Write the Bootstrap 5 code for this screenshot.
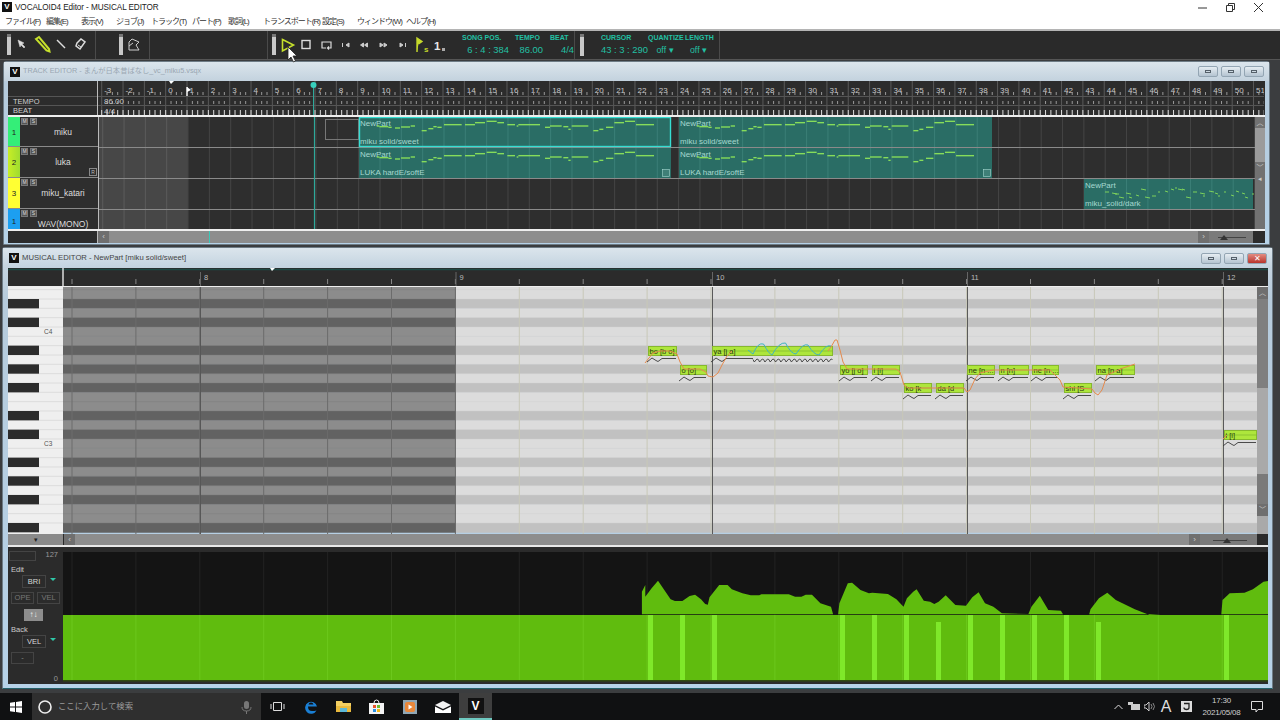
<!DOCTYPE html>
<html lang="ja">

<head>
    <meta charset="UTF-8">
    <title>VOCALOID4 Editor - MUSICAL EDITOR</title>
    <link href="https://cdn.jsdelivr.net/npm/bootstrap@5.3.0/dist/css/bootstrap.min.css" rel="stylesheet">
    <style>
        html, body { width: 1280px; height: 720px; overflow: hidden; }
        body { font-family: "Liberation Sans", "Noto Sans CJK JP", sans-serif; background: #3b3d3f; color: #ddd; position: relative; }
        svg { display: block; }
        svg text { font-family: "Liberation Sans", "Noto Sans CJK JP", sans-serif; }

        .app-title { height: 14px; background: #fff; color: #222; font-size: 8.2px; line-height: 15px; letter-spacing: -.1px; }
        .v-logo { width: 10px; height: 10px; background: #111; color: #fff; font-size: 8px; line-height: 10px; text-align: center; font-weight: 700; flex: none; letter-spacing: 0; }
        .app-title .v-logo { margin: 2px 3px 0 2px; }
        .cap-btn { width: 28px; height: 14px; }
        .app-menu { height: 15px; background: #fff; color: #333; font-size: 8px; line-height: 15px; padding-left: 5px; white-space: nowrap; letter-spacing: -1px; }
        .tool-strip { height: 31px; background: #2a2a2a; border-top: 2px solid #b4b4b4; border-bottom: 1px solid #555; color: #22c0a4; }
        .tool-group { height: 100%; border-right: 1px solid #4a4a4a; flex: none; }
        .tg-a { width: 96px; } .tg-b { width: 54px; } .tg-c { width: 118px; }
        .tg-d { width: 307px; } .tg-e { width: 145px; }
        .stat-col { display: flex; flex-direction: column; flex: none; padding-top: 2px; }
        .stat-label { font-size: 7px; line-height: 9px; white-space: nowrap; font-weight: 600; }
        .stat-value { font-size: 9.4px; line-height: 14px; margin-top: 1px; text-align: right; white-space: nowrap; }
        .sc-pos { width: 47px; margin-left: 12px; } .sc-tempo { width: 28px; margin-left: 6px; } .sc-beat { width: 24px; margin-left: 7px; }
        .sc-cursor { width: 44px; margin-left: 17px; } .sc-quant { width: 34px; margin-left: 3px; } .sc-len { width: 27px; margin-left: 3px; }
        .sc-quant .stat-value, .sc-len .stat-value { text-align: center; font-size: 8.8px; }
        .tool-grip { width: 4px; height: 22px; margin: 3px 0 0 5px; background: #c8c8c8; border-top: 3px solid #777; flex: none; }

        .mdi-area { height: 633px; padding-top: 1px; }
        .win-frame { border: 1px solid #6e7c86; border-radius: 3px 3px 0 0; background: linear-gradient(#cdd9e3, #b6cbdc 12%, #b6d2e8); }
        .win-track { width: 1267px; margin-left: 3px; height: 184px; padding: 0 4px; }
        .win-musical { width: 1271px; margin: 2px 0 0 2px; height: 442px; padding: 0 4px 0 5px; border-bottom-color: #24606a; }
        .win-head { align-items: center; }
        .win-track .win-head { height: 19px; font-size: 7.3px; color: #9aa7b2; background: linear-gradient(#dbe5ec, #c3d2de); margin: 0 -4px; padding: 0 5px; }
        .win-musical .win-head { height: 20px; font-size: 7.7px; color: #444; background: linear-gradient(#dbe5ec, #c3d3e0); margin: 0 -4px 0 -5px; padding: 0 5px; }
        .win-head .v-logo { margin: 0 3px 0 1px; }
        .win-btn { width: 20px; height: 11px; border: 1px solid #93a5b3; border-radius: 2px; background: linear-gradient(#e6edf2, #b4c4d1); margin-left: 3px; display: flex; align-items: center; justify-content: center; flex: none; }
        .win-btn i { display: block; width: 6px; height: 3px; border: 1px solid #55606a; }
        .win-btn.btn-x { background: linear-gradient(#e38b80, #b8342c); color: #fff; font-size: 8px; line-height: 9px; font-style: normal; }

        .ruler-head { width: 90px; background: #2c2c2c; border-right: 1px solid #bbb; color: #cfcfcf; font-size: 7.5px; flex: none; }
        .rh-line { height: 9px; line-height: 9px; padding-left: 5px; border-top: 1px solid #555; }
        .rh-top { height: 15px; }
        .track-ruler { height: 36px; background: #2c2c2c; border-bottom: 2px solid #eee; }
        .track-body { height: 112px; }
        .track-heads { width: 91px; border-right: 1px solid #bbb; flex: none; background: #2e2e2e; }
        .t-row { border-bottom: 1px solid #8a8a8a; position: relative; }
        .t-row:last-child { border-bottom: 0; }
        .tr-h30 { height: 30px; } .tr-h31 { height: 31px; } .tr-h20 { height: 20px; }
        .t-tab { width: 12px; color: #222; font-size: 8px; text-align: center; padding-top: 10px; flex: none; }
        .t-tab.last { padding-top: 7px; }
        .tab-g { background: #34ee78; } .tab-l { background: linear-gradient(90deg, #c8ee26, #9fdc30); } .tab-y { background: #ffff33; } .tab-b { background: #1c9ff0; }
        .t-name { font-size: 8.5px; color: #ddd; flex-grow: 1; text-align: center; padding: 9px 0 0 8px; white-space: nowrap; }
        .t-name.last { padding-top: 9px; }
        .ms-box { position: absolute; left: 13px; top: 1px; display: flex; gap: 2px; }
        .ms-box span { width: 7px; height: 7px; border: 1px solid #777; background: #555; font-size: 5px; line-height: 5px; text-align: center; color: #ddd; }
        .r-box { position: absolute; right: 1px; bottom: 1px; width: 8px; height: 8px; border: 1px solid #888; font-size: 5px; line-height: 6px; text-align: center; color: #bbb; }

        .v-bar { width: 10px; background: #9b9b9b; flex: none; }
        .vb-btn { background: #727272; color: #ccc; font-size: 7px; line-height: 11px; height: 11px; text-align: center; }
        .track-gap { height: 2px; background: #eee; }
        .h-bar { height: 12px; background: #2c2c2c; position: relative; }
        .hb-blank { width: 90px; border-right: 1px solid #bbb; flex: none; }
        .hb-arrow { width: 11px; background: #6f6f6f; color: #ccc; font-size: 8px; line-height: 11px; text-align: center; flex: none; }
        .hb-thumb { background: #8d8d8d; flex-grow: 1; }
        .hb-zoom { width: 44px; background: #7a7a7a; flex: none; }
        .hb-tail { width: 12px; flex: none; }
        .pos-mark { position: absolute; left: 201px; top: 0; width: 1px; height: 12px; background: #39c9b8; }

        .roll-ruler { height: 19px; background: #2b2b2b; border-bottom: 1px solid #eee; }
        .roll-body { height: 247px; }
        .v-roll { width: 11px; background: #a9a9a9; flex: none; }
        .vr-btn { height: 12px; background: #6f6f6f; color: #ccc; font-size: 7px; line-height: 12px; text-align: center; }
        .vr-thumb { height: 89px; background: #7f7f7f; }
        .vr-zoom { height: 30px; margin-top: 86px; background: #7a7a7a; }
        .roll-scroll { height: 11px; background: #2b2b2b; }
        .rs-drop { width: 55px; background: #8a8a8a; color: #222; font-size: 7px; line-height: 11px; text-align: center; margin-right: 1px; flex: none; }
        .rs-zoom { width: 57px; background: #7a7a7a; flex: none; }
        .rs-tail { width: 11px; flex: none; }
        .ctrl-gap { height: 2px; background: #e8e8e8; }
        .ctrl-area { height: 137px; }
        .ctrl-side { width: 55px; background: #2b2b2b; color: #bbb; font-size: 7.5px; position: relative; flex: none; }
        .cs-box { border: 1px solid #444; display: block; text-align: center; color: #d8d8d8; font-size: 7.5px; }
        .cs-val { position: absolute; right: 5px; }
        .cs-top { top: 0; width: 27px; height: 10px; margin: 4px 0 0 1px; color: #999; }
        .cs-val.v-top { top: 2px; color: #999; }
        .cs-val.v-zero { bottom: 0; color: #999; }
        .cs-lab { margin: 4px 0 0 3px; line-height: 9px; color: #ccc; }
        .cs-sel { width: 24px; height: 13px; line-height: 11px; margin: 1px 0 0 14px; position: relative; }
        .cs-sel::after { content: ""; position: absolute; left: 27px; top: 2px; border: 3px solid transparent; border-top-color: #2fc7a8; }
        .cs-pair { margin: 4px 0 0 3px; gap: 3px; }
        .cs-pair span { width: 23px; height: 12px; line-height: 10px; color: #777; }
        .cs-arrows { width: 19px; height: 12px; margin: 5px 0 0 16px; background: #8d8d8d; border: 0; color: #eee; line-height: 12px; font-size: 8px; }
        .cs-dash { width: 23px; height: 12px; margin: 4px 0 0 3px; line-height: 10px; color: #888; }

        .task-bar { height: 27px; background: #101112; }
        .tb-start { width: 32px; flex: none; }
        .tb-search { width: 229px; background: #2f2f2f; color: #9b9b9b; font-size: 8.4px; flex: none; }
        .tb-btn { width: 33px; height: 27px; flex: none; }
        .tb-btn.is-on { background: #3e3e3e; border-bottom: 2px solid #6fc9c0; }
        .tb-btn .v-logo { width: 16px; height: 16px; font-size: 12px; line-height: 16px; }
        .tb-tray { width: 16px; flex: none; color: #ddd; }
        .tb-clock { width: 47px; font-size: 8px; line-height: 12px; color: #cfcfcf; text-align: center; flex: none; margin-left: 4px; white-space: nowrap; letter-spacing: -.2px; }
        .tb-note { width: 25px; flex: none; }
        .tb-tail { width: 10px; flex: none; }
        .mouse-arrow { position: absolute; left: 287px; top: 46px; }
    </style>
</head>

<body>
    <!-- ウィンドウタイトル -->
    <div class="app-title d-flex">
        <span class="v-logo">V</span>
        <span class="flex-grow-1">VOCALOID4 Editor - MUSICAL EDITOR</span>
        <span class="cap-btn d-flex justify-content-center align-items-center"><svg width="9" height="9"><path d="M0 5h9" stroke="#333"/></svg></span>
        <span class="cap-btn d-flex justify-content-center align-items-center"><svg width="9" height="9"><path d="M.5 2.5h6v6h-6zM2.5 2.5v-2h6v6h-2" fill="none" stroke="#333"/></svg></span>
        <span class="cap-btn d-flex justify-content-center align-items-center me-2"><svg width="9" height="9"><path d="M0 0l9 9M9 0l-9 9" stroke="#333"/></svg></span>
    </div>
    <div class="app-menu d-flex" id="app-menu"></div>

    <!-- ツールバー -->
    <div class="tool-strip d-flex">
        <div class="tool-group tg-a">
            <svg width="96" height="28" viewBox="0 31 96 28">
                <rect x="7" y="34" width="4" height="21" fill="#c8c8c8"/><rect x="7" y="34" width="4" height="3" fill="#777"/>
                <path d="M18 40l6 3-2 1 3 3-1 1-3-3-1 2z" fill="#ddd" stroke="#ddd" stroke-width=".5"/>
                <path d="M36 39l3-2 10 12 .5 2.5-3-1z" fill="none" stroke="#c6e02c" stroke-width="2"/>
                <path d="M57 40l8 8" stroke="#ddd" stroke-width="1.4"/>
                <path d="M77 43l4-4 4 3-5 7-4-3z" fill="none" stroke="#ddd" stroke-width="1.5"/><path d="M78 45l3 2" stroke="#ddd"/>
            </svg>
        </div>
        <div class="tool-group tg-b">
            <svg width="53" height="28" viewBox="96 31 53 28">
                <rect x="119" y="34" width="4" height="21" fill="#c8c8c8"/><rect x="119" y="34" width="4" height="3" fill="#777"/>
                <path d="M129 50V42l3-3 7 3-3 3 3 5zM129 46l4-3" fill="none" stroke="#ccc" stroke-width="1"/>
            </svg>
        </div>
        <div class="tool-group tg-c"></div>
        <div class="tool-group tg-d d-flex">
            <svg width="182" height="28" viewBox="268 31 182 28" class="flex-none">
                <rect x="272" y="34" width="4" height="21" fill="#c8c8c8"/><rect x="272" y="34" width="4" height="3" fill="#777"/>
                <path d="M282.5 39.5l11 5.5-11 6z" fill="none" stroke="#c6e02c" stroke-width="1.6"/>
                <rect x="302" y="40.5" width="8" height="8" fill="none" stroke="#ddd" stroke-width="1.4"/>
                <path d="M326 48h-4v-6h9v6h-3m1-1.5l-1.5 1.5 1.5 1.5" fill="none" stroke="#ddd" stroke-width="1.2"/>
                <path d="M342.5 43v4M349 43l-3 2 3 2z" fill="#ccc" stroke="#ccc"/>
                <path d="M363.5 43l-3 2 3 2zM367.5 43l-3 2 3 2z" fill="#ccc" stroke="#ccc"/>
                <path d="M380 43l3 2-3 2zM384 43l3 2-3 2z" fill="#ccc" stroke="#ccc"/>
                <path d="M400 43l3 2-3 2zM405.5 43v4" fill="#ccc" stroke="#ccc"/>
                <path d="M417 52v-14l5 3.5-3.5 2.5" fill="#c6d92c" stroke="#c6d92c" stroke-width="1.4"/>
                <text x="424" y="52" font-size="8" font-weight="700" fill="#c6d92c">s</text>
                <text x="434" y="50" font-size="11.5" font-weight="700" fill="#e8e8e8">1</text>
                <rect x="442" y="48" width="3" height="3" fill="#aaa"/>
            </svg>
            <div class="stat-col sc-pos"><span class="stat-label">SONG POS.</span><span class="stat-value">6 : 4 : 384</span></div>
            <div class="stat-col sc-tempo"><span class="stat-label">TEMPO</span><span class="stat-value">86.00</span></div>
            <div class="stat-col sc-beat"><span class="stat-label">BEAT</span><span class="stat-value">4/4</span></div>
        </div>
        <div class="tool-group tg-e d-flex">
            <div class="tool-grip"></div>
            <div class="stat-col sc-cursor"><span class="stat-label">CURSOR</span><span class="stat-value">43 : 3 : 290</span></div>
            <div class="stat-col sc-quant"><span class="stat-label">QUANTIZE</span><span class="stat-value">off ▾</span></div>
            <div class="stat-col sc-len"><span class="stat-label">LENGTH</span><span class="stat-value">off ▾</span></div>
        </div>
    </div>

    <div class="mdi-area">
        <!-- トラックエディタ -->
        <div class="win-frame win-track">
            <div class="win-head d-flex">
                <span class="v-logo">V</span>
                <span class="flex-grow-1">TRACK EDITOR - まんが日本昔ばなし_vc_miku5.vsqx</span>
                <span class="win-btn"><i></i></span><span class="win-btn"><i></i></span><span class="win-btn"><i></i></span>
            </div>
            <div class="track-ruler d-flex">
                <div class="ruler-head">
                    <div class="rh-top"></div>
                    <div class="rh-line">TEMPO</div>
                    <div class="rh-line">BEAT</div>
                </div>
                <svg id="track-ruler-svg" width="1166" height="34" viewBox="99 81 1166 34"></svg>
            </div>
            <div class="track-body d-flex">
                <div class="track-heads">
                    <div class="t-row tr-h30 d-flex"><span class="t-tab tab-g">1</span><span class="t-name">miku</span><span class="ms-box"><span>M</span><span>S</span></span></div>
                    <div class="t-row tr-h31 d-flex"><span class="t-tab tab-l">2</span><span class="t-name">luka</span><span class="ms-box"><span>M</span><span>S</span></span><span class="r-box">R</span></div>
                    <div class="t-row tr-h31 d-flex"><span class="t-tab tab-y">3</span><span class="t-name">miku_katari</span><span class="ms-box"><span>M</span><span>S</span></span></div>
                    <div class="t-row tr-h20 d-flex"><span class="t-tab tab-b last">1</span><span class="t-name last">WAV(MONO)</span><span class="ms-box"><span>M</span><span>S</span></span></div>
                </div>
                <svg id="track-svg" width="1156" height="112" viewBox="99 117 1156 112"></svg>
                <div class="v-bar d-flex flex-column">
                    <div class="vb-btn">︿</div>
                    <div class="flex-grow-1"></div>
                    <div class="vb-btn">﹀</div>
                    <div class="vb-btn">◂</div>
                    <div class="vb-btn flex-grow-1"></div>
                </div>
            </div>
            <div class="track-gap"></div>
            <div class="h-bar d-flex">
                <div class="hb-blank"></div>
                <div class="hb-arrow">‹</div>
                <div class="hb-thumb"></div>
                <div class="hb-arrow">›</div>
                <div class="hb-zoom d-flex align-items-center justify-content-center"><svg width="34" height="8"><path d="M4 4.5h28" stroke="#444"/><path d="M6 7l4-5 4 5z" fill="#333"/></svg></div>
                <div class="hb-tail"></div>
                <div class="pos-mark"></div>
            </div>
        </div>

        <!-- ミュージカルエディタ -->
        <div class="win-frame win-musical">
            <div class="win-head d-flex">
                <span class="v-logo">V</span>
                <span class="flex-grow-1">MUSICAL EDITOR - NewPart [miku solid/sweet]</span>
                <span class="win-btn"><i></i></span><span class="win-btn"><i></i></span><span class="win-btn btn-x">✕</span>
            </div>
            <div class="roll-ruler"><svg id="roll-ruler-svg" width="1260" height="18" viewBox="8 268 1260 18"></svg></div>
            <div class="roll-body d-flex">
                <svg id="keys-svg" width="55" height="247" viewBox="8 287 55 247" class="flex-none"></svg>
                <svg id="roll-svg" width="1194" height="247" viewBox="63 287 1194 247" class="flex-none"></svg>
                <div class="v-roll d-flex flex-column">
                    <div class="vr-btn">︿</div>
                    <div class="vr-thumb"></div>
                    <div class="vr-zoom"></div>
                    <div class="vr-btn">﹀</div>
                </div>
            </div>
            <div class="roll-scroll d-flex">
                <div class="rs-drop">▾</div>
                <div class="hb-arrow">‹</div>
                <div class="hb-thumb"></div>
                <div class="hb-arrow">›</div>
                <div class="rs-zoom d-flex align-items-center justify-content-center"><svg width="40" height="8"><path d="M4 4.5h34" stroke="#444"/><path d="M14 7l4-5 4 5z" fill="#333"/></svg></div>
                <div class="rs-tail"></div>
            </div>
            <div class="ctrl-gap"></div>
            <div class="ctrl-area d-flex">
                <div class="ctrl-side">
                    <span class="cs-box cs-top"></span>
                    <span class="cs-val v-top">127</span>
                    <div class="cs-lab">Edit</div>
                    <span class="cs-box cs-sel">BRI</span>
                    <div class="cs-pair d-flex"><span class="cs-box">OPE</span><span class="cs-box">VEL</span></div>
                    <span class="cs-box cs-arrows">↑↓</span>
                    <div class="cs-lab">Back</div>
                    <span class="cs-box cs-sel">VEL</span>
                    <span class="cs-box cs-dash">-</span>
                    <span class="cs-val v-zero">0</span>
                </div>
                <svg id="ctrl-svg" width="1205" height="137" viewBox="63 547 1205 137"></svg>
            </div>
        </div>
    </div>

    <!-- タスクバー -->
    <div class="task-bar d-flex align-items-center">
        <div class="tb-start d-flex justify-content-center align-items-center"><svg width="12" height="12"><path d="M0 1.8l5-.7v4.5H0zM6 1l6-1v5.6H6zM0 6.4h5v4.5l-5-.7zM6 6.4h6V12l-6-1z" fill="#fff"/></svg></div>
        <div class="tb-search d-flex align-items-center h-100">
            <svg width="22" height="14" class="ms-1"><circle cx="9" cy="7" r="6" fill="none" stroke="#eee" stroke-width="1.6"/></svg>
            <span class="flex-grow-1">ここに入力して検索</span>
            <svg width="22" height="14"><rect x="5" y="1" width="5" height="8" rx="2.5" fill="#777"/><path d="M3 7q0 4 4.500 4t4.500-4M7.500 11v3" fill="none" stroke="#777"/></svg>
        </div>
        <div class="tb-btn d-flex justify-content-center align-items-center"><svg width="15" height="11"><path d="M3.500 1.500h8v8h-8zM1 3v5M14 3v5" fill="none" stroke="#ddd"/></svg></div>
        <div class="tb-btn d-flex justify-content-center align-items-center"><svg width="14" height="14"><path d="M12.500 10.500A6 6 0 1 1 13 6.500H4q0 4.500 4 4.500 2.500 0 4.500-.5zM4.500 4.500h5Q9 2.500 7 2.500t-2.500 2z" fill="#1a7fd4" fill-rule="evenodd"/></svg></div>
        <div class="tb-btn d-flex justify-content-center align-items-center"><svg width="15" height="13"><path d="M0 1h6l1 2h8v9H0z" fill="#f2cf62"/><rect y="6" width="15" height="6" fill="#e8b93e"/><rect x="4" y="8" width="7" height="4" fill="#5cb8d8"/></svg></div>
        <div class="tb-btn d-flex justify-content-center align-items-center"><svg width="15" height="15"><rect y="4" width="15" height="11" fill="#f4f4f4"/><path d="M5 4q0-3 2.500-3t2.500 3" fill="none" stroke="#eee"/><rect x="4" y="6" width="3" height="3" fill="#e8512a"/><rect x="8" y="6" width="3" height="3" fill="#6dbb30"/><rect x="4" y="10" width="3" height="3" fill="#2a8fe0"/><rect x="8" y="10" width="3" height="3" fill="#f4b81c"/></svg></div>
        <div class="tb-btn d-flex justify-content-center align-items-center"><svg width="14" height="14"><rect width="14" height="14" fill="#8fa6b4"/><rect x="2" y="2" width="10" height="10" rx="2" fill="#e8873a"/><path d="M5.500 4.500l4 2.500-4 2.500z" fill="#fff"/></svg></div>
        <div class="tb-btn d-flex justify-content-center align-items-center"><svg width="16" height="12"><path d="M0 4l8-4 8 4-8 4z" fill="#fff" opacity=".95"/><path d="M0 5.500l8 4 8-4V12H0z" fill="#fff"/></svg></div>
        <div class="tb-btn is-on d-flex justify-content-center align-items-center"><span class="v-logo">V</span></div>
        <div class="flex-grow-1"></div>
        <div class="tb-tray d-flex justify-content-center"><svg width="9" height="6"><path d="M.5 5l4-4 4 4" fill="none" stroke="#ddd"/></svg></div>
        <div class="tb-tray d-flex justify-content-center"><svg width="12" height="9"><rect x="3" y="2" width="9" height="6" fill="#ccc"/><rect y="0" width="5" height="3" fill="#ccc"/></svg></div>
        <div class="tb-tray d-flex justify-content-center"><svg width="12" height="11"><path d="M0 4h2l3-3v9L2 7H0z" fill="none" stroke="#ccc"/><path d="M7 3q2 2.500 0 5M9 2q3 3.500 0 7" fill="none" stroke="#888"/></svg></div>
        <div class="tb-tray text-center">A</div>
        <div class="tb-tray ms-1 d-flex justify-content-center"><svg width="11" height="11"><rect width="11" height="11" fill="#ddd"/><path d="M3 2.500h5v4q0 2-2.500 2t-2.500-2" fill="none" stroke="#222" stroke-width="1.3"/></svg></div>
        <div class="tb-clock"><div>17:30</div><div>2021/05/08</div></div>
        <div class="tb-note d-flex justify-content-center"><svg width="13" height="12"><path d="M.5.500h11v8H7L5 11V8.500H.500z" fill="none" stroke="#ddd"/></svg></div>
        <div class="tb-tail"></div>
    </div>

    <svg class="mouse-arrow" width="12" height="17"><path d="M1 1v13l3-3 2.500 5 2-1-2.500-5h4z" fill="#fff" stroke="#222" stroke-width=".8"/></svg>

    <script src="https://cdn.jsdelivr.net/npm/bootstrap@5.3.0/dist/js/bootstrap.bundle.min.js"></script>
    <script>
        const byId = id => document.getElementById(id);
        const line = (x1, y1, x2, y2, c, w = 1) => `<line x1="${x1}" y1="${y1}" x2="${x2}" y2="${y2}" stroke="${c}" stroke-width="${w}"/>`;
        const box = (x, y, w, h, c) => `<rect x="${x}" y="${y}" width="${w}" height="${h}" fill="${c}"/>`;
        const label = (x, y, t, size, c) => `<text x="${x}" y="${y}" font-size="${size}" fill="${c}">${t}</text>`;

        // メニュー
        byId('app-menu').innerHTML = [['ファイル(F)', 41], ['編集(E)', 35], ['表示(V)', 35], ['ジョブ(J)', 35], ['トラック(T)', 41], ['パート(P)', 36], ['歌詞(L)', 35], ['トランスポート(R)', 59], ['設定(S)', 35], ['ウィンドウ(W)', 49], ['ヘルプ(H)', 40]]
            .map(m => `<span style="width:${m[1]}px">${m[0]}</span>`).join('');

        // トラックのルーラー
        const barX = n => 166.7 + n * 21.33;
        let s = '';
        for (let n = -3; n <= 51; n++) {
            const x = barX(n);
            s += line(x, 81, x, 115, '#5a5a5a');
            s += label(x + 2.5, 93, n, 8, '#c9c9c9');
            for (let b = 1; b < 4; b++) {
                const tx = x + b * 5.33;
                s += line(tx, 92, tx, 95, '#999') + line(tx, 101, tx, 104, '#999');
            }
            for (let b = 0; b < 4; b++) {
                const tx = x + b * 5.33;
                s += line(tx, 110, tx, 115, '#ddd');
            }
        }
        s += line(99, 96.5, 1265, 96.5, '#555') + line(99, 105.5, 1265, 105.5, '#555');
        s += label(105, 104, '86.00', 8, '#c9c9c9') + label(105, 114, '4/4', 8, '#c9c9c9');
        s += '<path d="M170 81h5l-3 3z" fill="#fff"/><path d="M188 87v9" stroke="#fff" stroke-width="1.4"/><path d="M188 87l4 3-4 2z" fill="#fff"/>';
        s += line(314.5, 85, 314.5, 115, '#2ea99b') + '<circle cx="314.5" cy="85" r="3" fill="#38d0bd"/>';
        byId('track-ruler-svg').innerHTML = s;

        // パートの中のノート (パート先頭からの相対位置)
        const partNotes = [[170,178,78],[178,205,80],[205,215,82],[225,240,84],[243,270,81],[272,285,78],[305,320,92],[325,340,86],[340,350,80],[352,365,82],[372,425,74],[435,465,74],[465,495,68],[500,530,64],[532,552,68],[562,585,74],[590,595,78],[595,660,74],[675,690,82],[690,725,78],[730,745,80],[745,752,88],[755,805,78],[820,835,92],[838,850,88],[858,880,82],[883,912,68],[915,945,64],[948,1002,74]];

        function drawPart(x, y, w, h, name, selected, withNotes, withR) {
            let p = box(x, y, w, h, '#2a6d65');
            for (let n = -3; n <= 60; n++) {
                const bx = barX(n);
                if (bx > x && bx < x + w) p += line(bx, y, bx, y + h, '#3b7f77');
            }
            if (withNotes) {
                partNotes.forEach(n => {
                    const ny = y + n[2] / 3 - 17;
                    p += line(x + (n[0] - 117) / 3, ny, x + (n[1] - 117) / 3, ny, '#86dc5a', 1.4);
                });
            }
            p += label(x + 1, y + 9, 'NewPart', 8, '#a6d8d0');
            p += label(x + 1, y + h - 3, name, 8, '#a6d8d0');
            if (withR) p += `<rect x="${x + w - 8.5}" y="${y + h - 8.5}" width="7" height="7" fill="#3f7f77" stroke="#a6d8d0" stroke-width=".6"/>`;
            if (selected) p += `<rect x="${x + .5}" y="${y + .5}" width="${w - 1}" height="${h - 1}" fill="none" stroke="#36ddd2" stroke-width="1.4"/>`;
            return p;
        }

        s = box(99, 117, 1156, 112, '#2e2e2e') + box(99, 117, 89, 112, '#474747');
        for (let n = -3; n <= 51; n++) {
            s += line(barX(n), 117, barX(n), 229, n < 1 ? '#5c5c5c' : '#454545');
        }
        [147.5, 178.5, 209.5].forEach(y => { s += line(99, y, 1255, y, '#8a8a8a'); });
        s += '<rect x="325.500" y="119.500" width="33" height="20" fill="none" stroke="#777"/>';
        s += drawPart(679, 148, 313, 30, 'LUKA hardE/softE', false, true, true);
        s += drawPart(679, 117, 313, 30, 'miku solid/sweet', false, true, false);
        s += drawPart(359, 148, 312, 30, 'LUKA hardE/softE', false, true, true);
        s += drawPart(359, 117, 312, 30, 'miku solid/sweet', true, true, false);
        s += drawPart(1084, 179, 169, 30, 'miku_solid/dark', false, false, false);
        // 語りトラックの細かいノート
        let seed = 7;
        for (let x = 1105; x < 1253; x += 3 + seed % 5) {
            seed = (seed * 31 + 11) % 97;
            const y = 188 + seed % 10;
            s += line(x, y, x + 2 + seed % 4, y + seed % 2, '#86dc5a', .9);
        }
        s += line(314.5, 117, 314.5, 229, '#2ea99b', 1.2);
        byId('track-svg').innerHTML = s;

        // ピアノロールのルーラー
        s = box(8, 268, 1260, 18, '#2b2b2b') + line(8, 269.5, 1268, 269.5, '#1f4a45', 1.5);
        s += line(63, 268, 63, 286, '#ddd', 1.5);
        for (let x = 72; x < 1257; x += 63.9) {
            s += line(x, 279, x, 284, '#888');
        }
        [[200.5, '8'], [456, '9'], [712.5, '10'], [967.5, '11'], [1223.5, '12']].forEach(b => {
            s += line(b[0], 272, b[0], 286, '#666') + label(b[0] + 3.5, 280, b[1], 7.5, '#bbb');
        });
        s += '<path d="M270 268h5l-3 3z" fill="#fff"/>';
        byId('roll-ruler-svg').innerHTML = s;

        // 鍵盤
        const rowH = 9.333, rowTop = k => 289.67 + k * rowH;
        const blackRows = [1, 3, 6, 8, 10, 13, 15, 18, 20, 22, 25];
        s = box(8, 287, 55, 247, '#efefef');
        for (let k = -1; k < 26; k++) {
            s += line(8, rowTop(k), 63, rowTop(k), '#dcdcdc');
        }
        blackRows.forEach(k => { s += box(8, rowTop(k), 31, rowH, '#2c2c2c'); });
        s += label(44, 334, 'C4', 6.5, '#555') + label(44, 446, 'C3', 6.5, '#555');
        byId('keys-svg').innerHTML = s;

        // ピアノロール本体
        s = '';
        for (let k = -1; k < 26; k++) {
            const isBlack = blackRows.includes(k);
            s += box(63, rowTop(k), 393, rowH + .4, isBlack ? '#626262' : '#8c8c8c');
            s += box(456, rowTop(k), 801, rowH + .4, isBlack ? '#c1c1c1' : '#dcdcdc');
            s += line(63, rowTop(k), 456, rowTop(k), '#7c7c7c', .4) + line(456, rowTop(k), 1257, rowTop(k), '#d0d0d0', .4);
        }
        for (let x = 72; x < 1257; x += 63.9) {
            s += line(x, 287, x, 534, x < 456 ? '#6c6c6c' : '#c8c8b8');
        }
        s += line(200.5, 287, 200.5, 534, '#575757') + line(712.5, 287, 712.5, 534, '#5a5a5a') + line(967.5, 287, 967.5, 534, '#5a5a5a') + line(1223.5, 287, 1223.5, 534, '#5a5a5a');

        const notes = [
            ['bo [b o]', 648, 677, 346], ['o [o]', 680, 707, 365], ['ya [j a]', 712, 833, 346],
            ['yo [j o]', 840, 868, 365], ['i [i]', 872, 900, 365], ['ko [k', 904, 932, 383],
            ['da [d', 936, 964, 383], ['ne [n ...', 967, 995, 365], ['n [n]', 999, 1029, 365],
            ['ne [n ...', 1032, 1059, 365], ['shi [S', 1064, 1092, 383], ['na [n a]', 1096, 1135, 365],
            ['i [i]', 1224, 1257, 430]
        ];
        notes.forEach(n => {
            s += `<rect x="${n[1] + .5}" y="${n[3] + .5}" width="${n[2] - n[1] - 1}" height="9" fill="#aee63c" stroke="#86b82e"/>`;
            s += line(n[1], n[3] + 5, n[2], n[3] + 5, '#7fb52b', .7);
            s += label(n[1] + 1.5, n[3] + 7.5, n[0], 7.5, '#2c3a10');
            const y = n[3] + 16;
            let d = `M${n[1] - 1} ${y}l5 -4 4 2.500 2 1 4 -3h${n[2] - n[1] - 15}`;
            if (n[0] === 'ya [j a]') {
                d = `M${n[1] - 1} ${y}l5 -4 4 2.500 2 1 4 -3h27`;
                for (let x = 753; x < 831; x += 5.3) d += ` M${x} ${y - 2.5}l1.300 2.500 2.600 -3 1.400 .5`;
            }
            s += `<path d="${d}" fill="none" stroke="#3a3a3a" stroke-width=".9"/>`;
        });
        // ピッチカーブとビブラート
        s += '<path d="M645 363L653 353 660 351 670 351 677 354 680 362 684 369 700 369 706 372 708 376 713 377 718 373 722 365 727 356 732 351M828 351L831 347 835 340 837 340 840 350 843 362 847 369 896 369 900 372 904 385 908 388 964 388 967 392 970 390 975 379 980 373 993 370 1050 370 1060 380 1063 387 1092 389 1095 393 1098 395 1102 390 1107 375 1123 368 1135 364M1223 439L1227 435" fill="none" stroke="#e58a4e" stroke-width="1"/>';
        s += '<path d="M748 350L753 354Q758 342 763.500 344Q769 354 772 355Q779 342 785.500 343Q791 354 796 354Q803 343 808 345Q814 355 819 355Q826 344 831 346" fill="none" stroke="#3fb3c2" stroke-width="1"/>';
        byId('roll-svg').innerHTML = s;

        // ベロシティ/ブライトネス
        const curve = [[52,163],[52,95],[60,75],[60,110],[75,85],[90,62],[105,90],[120,118],[130,123],[148,123],[165,108],[178,104],[192,118],[202,132],[208,134],[212,112],[235,75],[255,75],[265,88],[290,100],[310,106],[330,106],[335,103],[400,103],[415,110],[430,110],[440,104],[455,104],[475,130],[500,140],[505,163],[517,163],[520,130],[540,70],[550,68],[570,90],[590,100],[598,98],[635,102],[655,118],[672,140],[680,115],[695,95],[703,88],[720,122],[735,125],[745,132],[755,125],[772,106],[795,135],[820,137],[835,112],[850,97],[865,130],[885,140],[905,160],[968,162],[975,140],[995,107],[1015,150],[1045,152],[1050,163],[1112,163],[1115,148],[1135,115],[1155,98],[1175,120],[1220,148],[1255,165],[1282,163],[1425,163],[1428,120],[1445,100],[1480,98],[1500,88],[1525,65],[1540,62],[1540,163]];
        const green = '#60bc0e';
        s = box(63, 547, 1205, 137, '#2b2b2b') + box(63, 552, 1205, 128, '#141414');
        for (let x = 72; x < 1268; x += 63.9) {
            s += line(x, 552, x, 615, '#232323');
        }
        s += box(63, 615, 1205, 65, green);
        s += `<polygon fill="${green}" points="${curve.map(p => (620 + p[0] / 2.37).toFixed(1) + ',' + (560 + p[1] / 3).toFixed(1)).join(' ')}"/>`;
        for (let x = 72; x < 1268; x += 63.9) {
            s += line(x, 615, x, 680, '#6cc81c');
        }
        [[648, 615], [680, 615], [712, 615], [840, 615], [872, 615], [904, 615], [936, 622], [968, 615], [1000, 615], [1032, 615], [1064, 615], [1096, 622], [1224, 615]].forEach(b => {
            s += box(b[0], b[1], 5, 680 - b[1], '#7fe82a');
        });
        s += box(63, 680, 1205, 1.5, '#2f4a10');
        byId('ctrl-svg').innerHTML = s;
    </script>
</body>

</html>
